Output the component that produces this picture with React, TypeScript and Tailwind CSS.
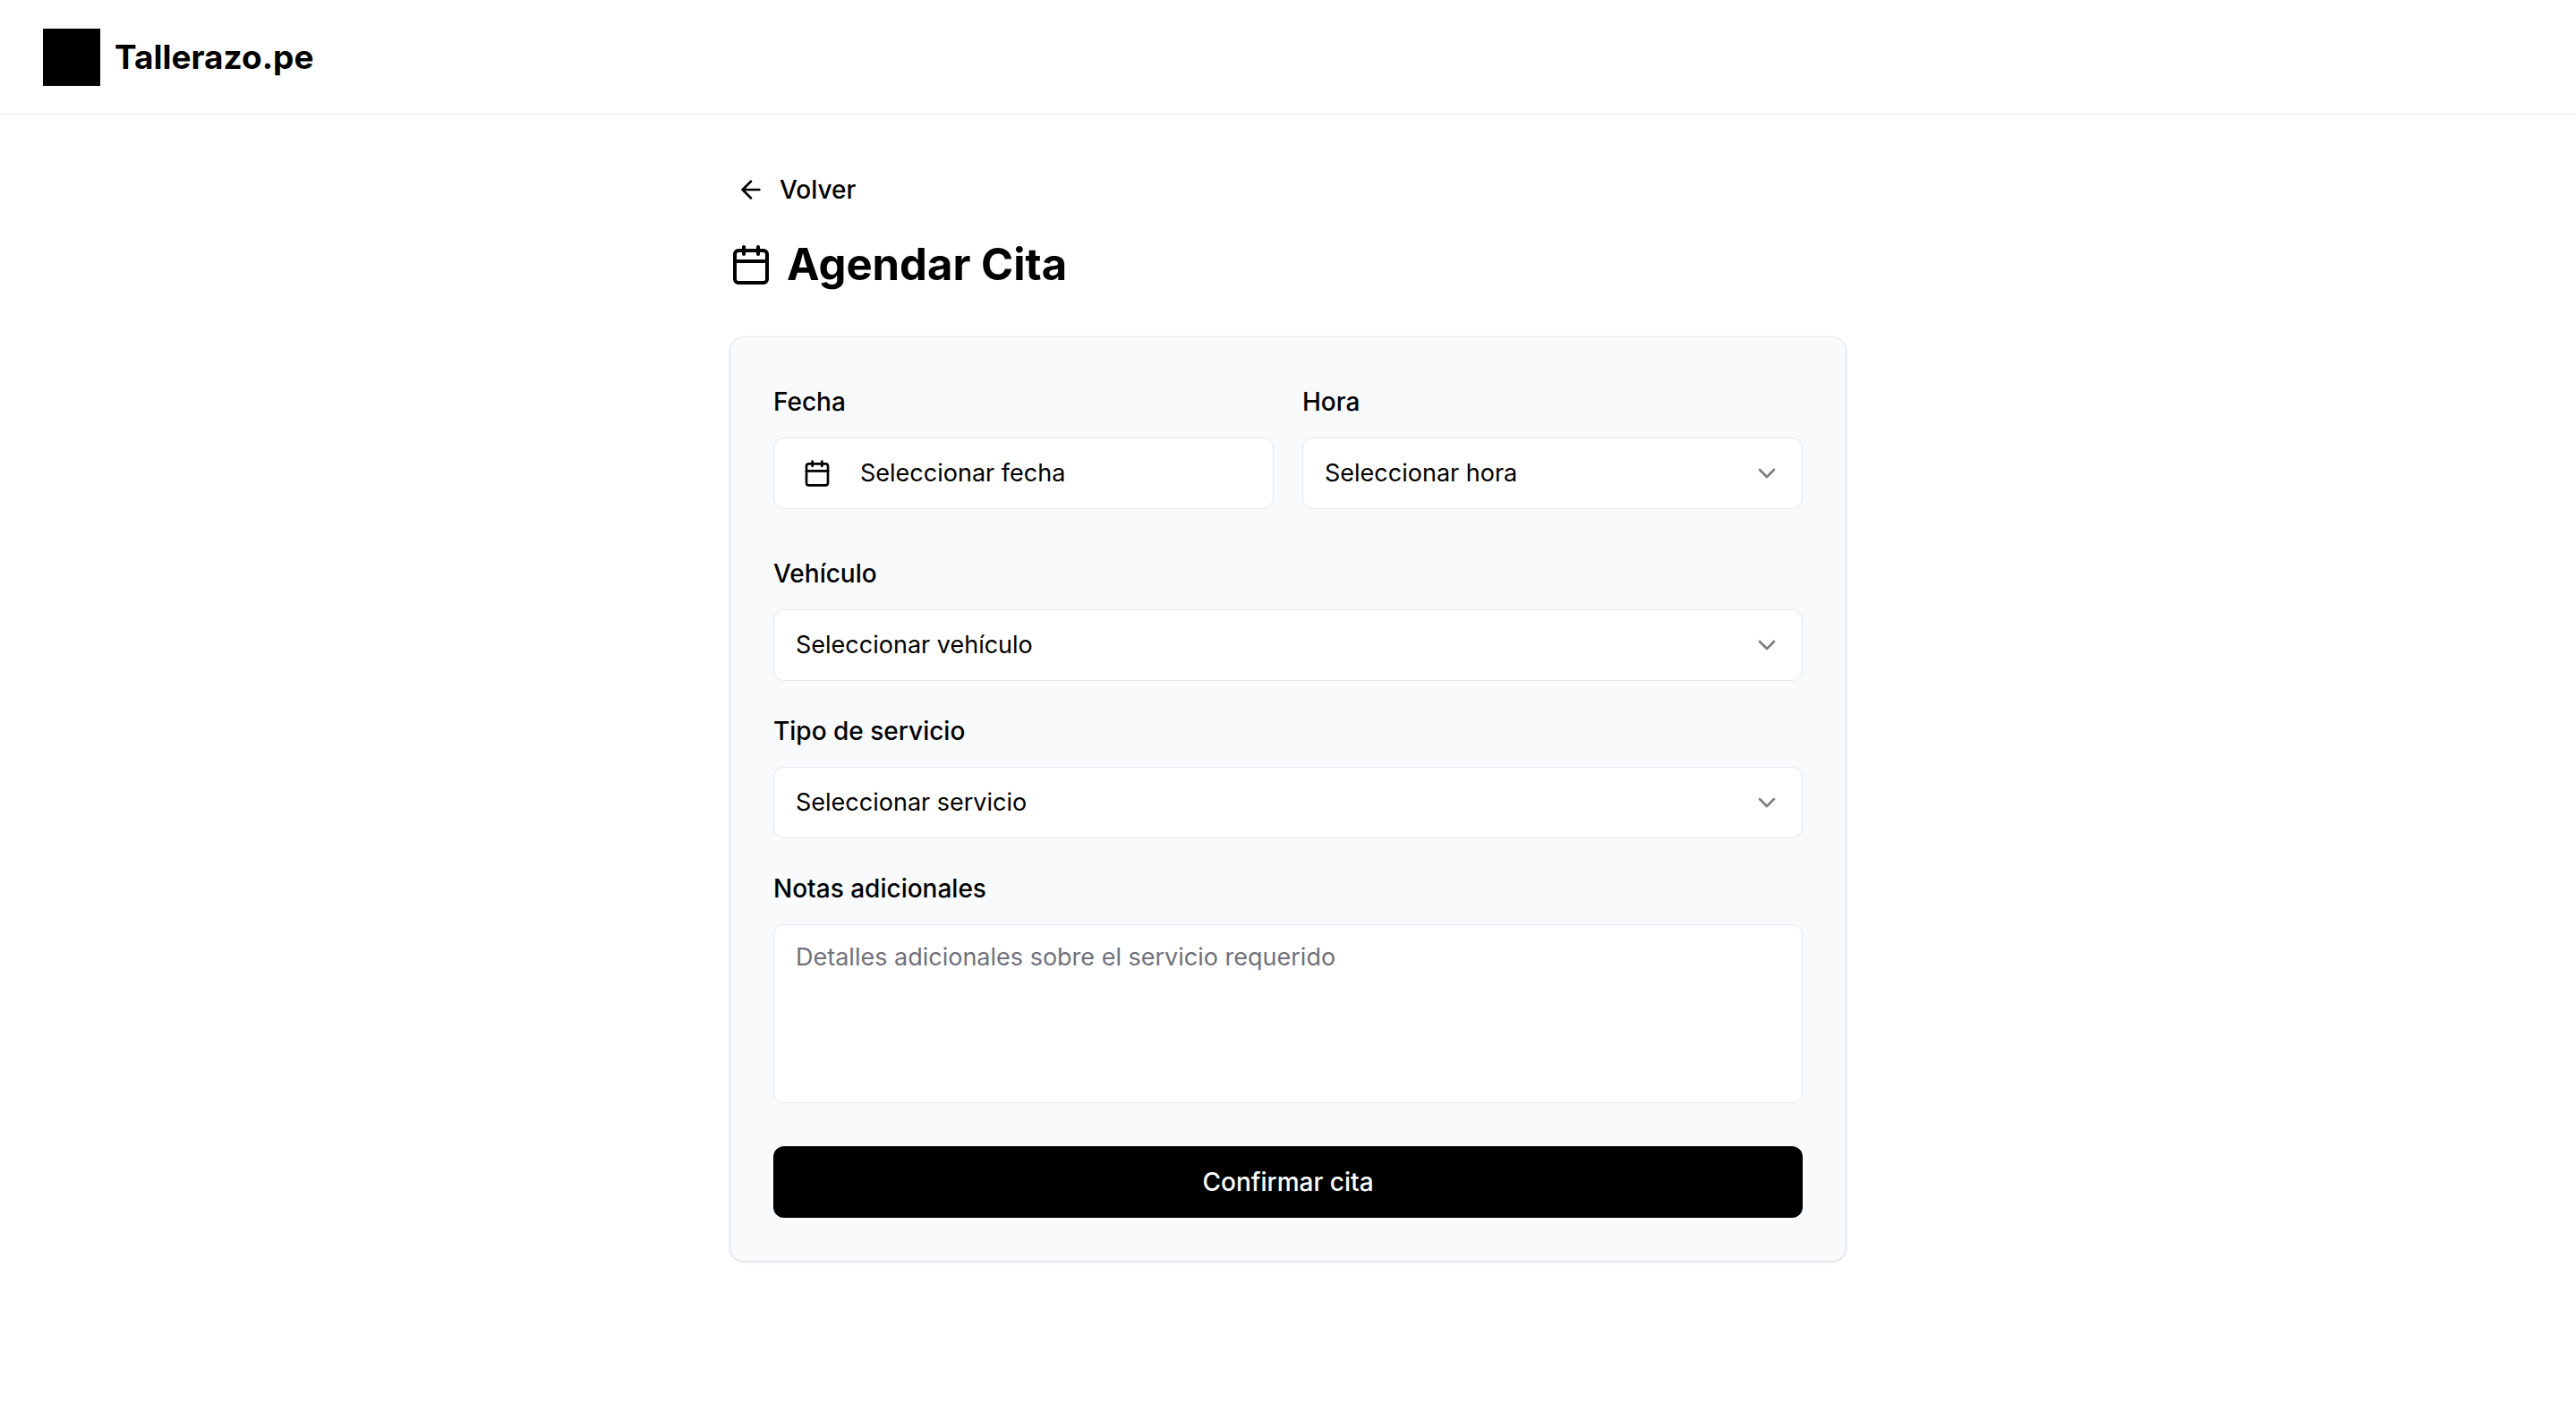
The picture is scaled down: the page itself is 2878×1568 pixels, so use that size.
import React from "react";
import { ArrowLeft, Calendar, ChevronDown } from "lucide-react";

function SelectField({ id, label, placeholder }: { id: string; label: string; placeholder: string }) {
  return (
    <div className="flex flex-col gap-6">
      <label htmlFor={id} className="text-[28px] leading-8 font-medium">
        {label}
      </label>
      <div className="relative">
        <select
          id={id}
          className="block h-20 w-full appearance-none rounded-xl border border-gray-200 bg-white pr-20 pl-6 text-[27px] leading-10"
        >
          <option>{placeholder}</option>
        </select>
        <ChevronDown className="pointer-events-none absolute top-6 right-6 size-8 opacity-50" />
      </div>
    </div>
  );
}

export default function App() {
  return (
    <div className="min-h-screen bg-white font-['Inter',sans-serif] text-black">
      <header className="flex h-32 items-center border-b border-gray-200 px-12">
        <a href="#" className="flex items-center gap-4">
          <span className="size-16 bg-black" />
          <span className="text-[37px] leading-14 font-bold">Tallerazo.pe</span>
        </a>
      </header>
      <main className="mx-auto flex max-w-[1248px] flex-col pt-11">
        <button type="button" className="flex h-20 items-center gap-4 self-start px-2 text-[28px] leading-10 font-medium">
          <ArrowLeft className="size-8" />
          Volver
        </button>
        <h1 className="mt-3 flex items-center gap-4 text-[49px] leading-16 font-bold">
          <Calendar className="size-12" />
          Agendar Cita
        </h1>
        <form className="mt-12 flex flex-col gap-10 rounded-2xl border border-gray-200 bg-[#f9fafc] px-12 pt-14 pb-12 shadow-sm">
          <div className="mb-4 grid grid-cols-2 gap-8">
            <div className="flex flex-col gap-6">
              <label htmlFor="fecha" className="text-[28px] leading-8 font-medium">
                Fecha
              </label>
              <button
                id="fecha"
                type="button"
                className="flex h-20 items-center gap-8 rounded-xl border border-gray-200 bg-white px-8 text-[27px] leading-10"
              >
                <Calendar className="size-8" />
                Seleccionar fecha
              </button>
            </div>
            <SelectField id="hora" label="Hora" placeholder="Seleccionar hora" />
          </div>
          <SelectField id="vehiculo" label="Vehículo" placeholder="Seleccionar vehículo" />
          <SelectField id="servicio" label="Tipo de servicio" placeholder="Seleccionar servicio" />
          <div className="flex flex-col gap-6">
            <label htmlFor="notas" className="text-[28px] leading-8 font-medium">
              Notas adicionales
            </label>
            <textarea
              id="notas"
              placeholder="Detalles adicionales sobre el servicio requerido"
              className="block h-50 w-full resize-none rounded-xl border border-gray-200 bg-white px-6 py-4 text-[27px] leading-10 placeholder:text-[#71717a]"
            />
          </div>
          <button type="submit" className="mt-2 h-20 rounded-xl bg-black text-[28px] leading-10 font-medium text-white">
            Confirmar cita
          </button>
        </form>
      </main>
    </div>
  );
}
